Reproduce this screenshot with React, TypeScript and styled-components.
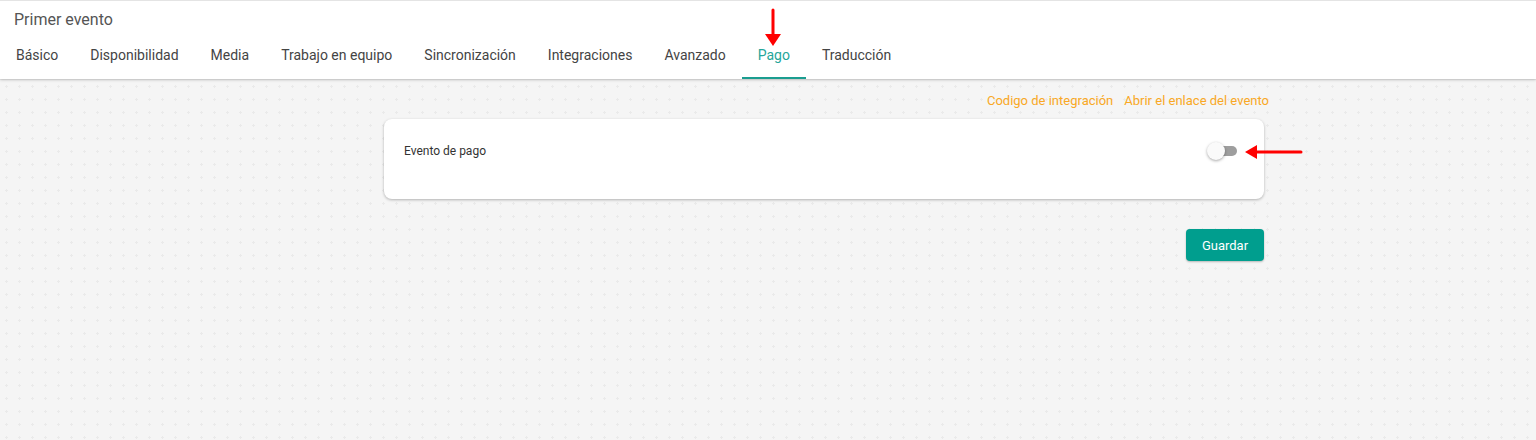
import React, { useState } from 'react'
import styled, { createGlobalStyle } from 'styled-components'

const GlobalStyle = createGlobalStyle`
  html, body {
    margin: 0;
    padding: 0;
  }
  body {
    font-family: Roboto, 'Liberation Sans', Arial, sans-serif;
    background-color: #f5f5f5;
    background-image: radial-gradient(circle, #eaeaea 1px, transparent 1.2px);
    background-size: 13px 13px;
    background-position: 0px 2px;
    height: 440px;
    overflow: hidden;
  }
`

const Page = styled.div`
  position: relative;
  min-height: 440px;
`

const Header = styled.header`
  background: #fff;
  padding-top: 3px;
  border-top: 1px solid #e4e4e4;
  box-shadow: 0 1px 3px rgba(0, 0, 0, 0.18), 0 1px 1px rgba(0, 0, 0, 0.06);
`

const Title = styled.h1`
  margin: 0;
  padding: 4px 14px 0;
  height: 24px;
  font-size: 16px;
  font-weight: 400;
  line-height: 24px;
  color: #555;
`

const Tabs = styled.nav`
  display: flex;
  height: 47px;
`

const Tab = styled.button<{ $active?: boolean }>`
  border: none;
  background: none;
  padding: 0 16px;
  height: 47px;
  font-family: inherit;
  font-size: 14px;
  color: ${p => (p.$active ? '#26a69a' : '#444')};
  border-bottom: 2px solid ${p => (p.$active ? '#1a9d90' : 'transparent')};
  cursor: pointer;
`

const Content = styled.main`
  width: 880px;
  margin-left: 384px;
  padding-top: 14px;
`

const Links = styled.div`
  display: flex;
  justify-content: flex-end;
  gap: 11px;
  margin-right: -5px;
  height: 16px;
`

const OrangeLink = styled.a`
  font-size: 13px;
  line-height: 16px;
  color: #f9a825;
  text-decoration: none;
  cursor: pointer;
`

const Card = styled.section`
  margin-top: 10px;
  height: 80px;
  background: #fff;
  border-radius: 8px;
  box-shadow: 0 1px 3px rgba(0, 0, 0, 0.28);
  display: flex;
  align-items: flex-start;
  justify-content: space-between;
  padding: 25px 27px 0 20px;
  box-sizing: border-box;
`

const Label = styled.span`
  font-size: 12px;
  color: #333;
  line-height: 14px;
`

const SwitchTrack = styled.button<{ $on: boolean }>`
  position: relative;
  width: 28px;
  height: 10px;
  margin-top: 2px;
  border: none;
  padding: 0;
  border-radius: 5px;
  background: ${p => (p.$on ? '#80cbc4' : '#9e9e9e')};
  cursor: pointer;
`

const SwitchThumb = styled.span<{ $on: boolean }>`
  position: absolute;
  top: -4px;
  left: ${p => (p.$on ? '12px' : '-2px')};
  width: 18px;
  height: 18px;
  border-radius: 50%;
  background: ${p => (p.$on ? '#26a69a' : '#fafafa')};
  box-shadow: 0 1px 3px rgba(0, 0, 0, 0.35);
`

const Actions = styled.div`
  display: flex;
  justify-content: flex-end;
  margin-top: 30px;
`

const SaveButton = styled.button`
  width: 78px;
  height: 32px;
  border: none;
  border-radius: 4px;
  background: #009e8e;
  color: #fff;
  font-family: inherit;
  font-size: 13px;
  box-shadow: 0 1px 2px rgba(0, 0, 0, 0.25);
  cursor: pointer;
`

const Arrow = styled.svg`
  position: absolute;
  pointer-events: none;
`

const tabs = [
  'Básico',
  'Disponibilidad',
  'Media',
  'Trabajo en equipo',
  'Sincronización',
  'Integraciones',
  'Avanzado',
  'Pago',
  'Traducción',
]

export default function App() {
  const [paid, setPaid] = useState(false)

  return (
    <Page>
      <GlobalStyle />
      <Header>
        <Title>Primer evento</Title>
        <Tabs>
          {tabs.map(t => (
            <Tab key={t} $active={t === 'Pago'}>
              {t}
            </Tab>
          ))}
        </Tabs>
      </Header>

      <Content>
        <Links>
          <OrangeLink>Codigo de integración</OrangeLink>
          <OrangeLink>Abrir el enlace del evento</OrangeLink>
        </Links>
        <Card>
          <Label>Evento de pago</Label>
          <SwitchTrack $on={paid} onClick={() => setPaid(!paid)}>
            <SwitchThumb $on={paid} />
          </SwitchTrack>
        </Card>
        <Actions>
          <SaveButton>Guardar</SaveButton>
        </Actions>
      </Content>

      {/* annotation arrows */}
      <Arrow style={{ left: 763, top: 8 }} width="20" height="40" viewBox="0 0 20 40">
        <line x1="10" y1="2" x2="10" y2="30" stroke="#f00" strokeWidth="3" strokeLinecap="round" />
        <polygon points="2,26 18,26 10,38" fill="#f00" />
      </Arrow>
      <Arrow style={{ left: 1243, top: 142 }} width="60" height="20" viewBox="0 0 60 20">
        <line x1="12" y1="10" x2="58" y2="10" stroke="#f00" strokeWidth="3" strokeLinecap="round" />
        <polygon points="2,10 14,3 14,17" fill="#f00" />
      </Arrow>
    </Page>
  )
}
